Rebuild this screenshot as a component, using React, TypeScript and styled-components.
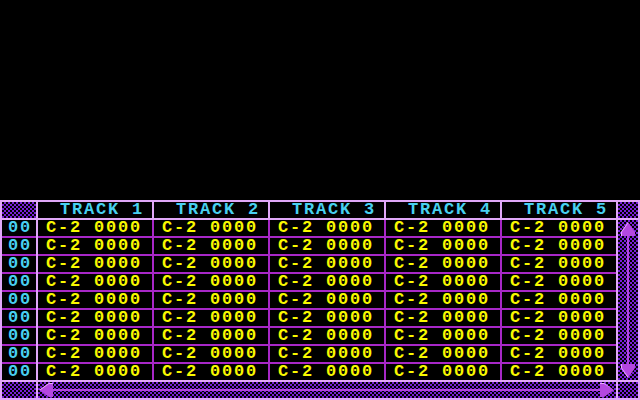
import React from "react";
import styled, { createGlobalStyle } from "styled-components";

const colors = {
  frame: "#e0a8f8",
  grid: "#a828c8",
  dither: "#7820d8",
  knob: "#b448e0",
  knobLight: "#e8a8ff",
  yellow: "#f8f800",
  cyan: "#48d0f0",
};

const dither = `conic-gradient(${colors.dither} 25%, #000 0 50%, ${colors.dither} 0 75%, #000 0) 0 0 / 4px 4px`;

const GlobalStyle = createGlobalStyle`
  html, body {
    margin: 0;
    padding: 0;
    background: #000;
  }
  body {
    width: 640px;
    height: 400px;
    overflow: hidden;
  }
`;

const Screen = styled.div`
  display: flex;
  flex-direction: column;
  width: 640px;
  height: 400px;
  background: #000;
  font-family: "Liberation Mono", "DejaVu Sans Mono", monospace;
  font-weight: bold;
  font-size: 17px;
  letter-spacing: 1.8px;
`;

const Blank = styled.div`
  flex: 1;
`;

// tracker frame
const Tracker = styled.div`
  display: grid;
  grid-template-columns: 34px repeat(5, 114px) 20px;
  grid-template-rows: 16px 160px 16px;
  gap: 2px;
  padding: 2px;
  background: ${colors.frame};
`;

const Dither = styled.div`
  background: ${dither};
`;

const HeaderCell = styled.div`
  background: #000;
  color: ${colors.cyan};
  line-height: 16px;
  padding-left: 22px;
  white-space: pre;
`;

const NumberColumn = styled.div`
  display: grid;
  grid-template-rows: repeat(9, 16px);
  row-gap: 2px;
  background: ${colors.grid};
`;

const NumberCell = styled.div`
  background: #000;
  color: ${colors.cyan};
  line-height: 16px;
  padding-left: 6px;
`;

const TrackBody = styled.div`
  grid-column: span 5;
  display: grid;
  grid-template-columns: repeat(5, 114px);
  grid-template-rows: repeat(9, 16px);
  gap: 2px;
  background: ${colors.grid};
`;

const NoteCell = styled.div`
  background: #000;
  color: ${colors.yellow};
  line-height: 16px;
  padding-left: 8px;
  white-space: pre;
`;

// scroll bars
const VScroll = styled.div`
  display: flex;
  flex-direction: column;
  align-items: center;
  background: ${dither};
  padding: 2px 0;
`;

const VStem = styled.div`
  flex: 1;
  width: 2px;
  background: ${colors.knob};
`;

const HScroll = styled.div`
  grid-column: span 5;
  display: flex;
  align-items: center;
  background: ${dither};
  padding: 0 2px 0 1px;
`;

const HStem = styled.div`
  flex: 1;
  height: 2px;
  background: ${colors.knob};
`;

const ArrowUp = () => (
  <svg width="20" height="14" viewBox="0 0 20 14">
    <path d="M10 0 L17 10 L17 14 L3 14 L3 10 Z" fill={colors.knob} />
    <path d="M10 0 L3 10 L3 14 L4 14 L4 10 L10 1.5 Z" fill={colors.knobLight} />
  </svg>
);

const ArrowDown = () => (
  <svg width="20" height="14" viewBox="0 0 20 14">
    <path d="M3 0 L17 0 L17 4 L10 14 L3 4 Z" fill={colors.knob} />
    <path d="M3 0 L4 0 L4 4 L10 12.5 L10 14 L3 4 Z" fill={colors.knobLight} />
  </svg>
);

const ArrowLeft = () => (
  <svg width="14" height="16" viewBox="0 0 14 16">
    <path d="M0 8 L10 1 L14 1 L14 15 L10 15 Z" fill={colors.knob} />
    <path d="M0 8 L10 1 L14 1 L14 2 L10 2 L1.5 8 Z" fill={colors.knobLight} />
  </svg>
);

const ArrowRight = () => (
  <svg width="14" height="16" viewBox="0 0 14 16">
    <path d="M0 1 L4 1 L14 8 L4 15 L0 15 Z" fill={colors.knob} />
    <path d="M0 1 L4 1 L12.5 7 L4 2 L0 2 Z" fill={colors.knobLight} />
  </svg>
);

const tracks = [1, 2, 3, 4, 5];
const rows = Array.from({ length: 9 }, (_, i) => i);

export default function App() {
  return (
    <>
      <GlobalStyle />
      <Screen>
        <Blank />
        <Tracker>
          <Dither />
          {tracks.map((t) => (
            <HeaderCell key={t}>{`TRACK ${t}`}</HeaderCell>
          ))}
          <Dither />

          <NumberColumn>
            {rows.map((r) => (
              <NumberCell key={r}>00</NumberCell>
            ))}
          </NumberColumn>
          <TrackBody>
            {rows.map((r) =>
              tracks.map((t) => <NoteCell key={`${r}-${t}`}>C-2 0000</NoteCell>)
            )}
          </TrackBody>
          <VScroll>
            <ArrowUp />
            <VStem />
            <ArrowDown />
          </VScroll>

          <Dither />
          <HScroll>
            <ArrowLeft />
            <HStem />
            <ArrowRight />
          </HScroll>
          <Dither />
        </Tracker>
      </Screen>
    </>
  );
}
